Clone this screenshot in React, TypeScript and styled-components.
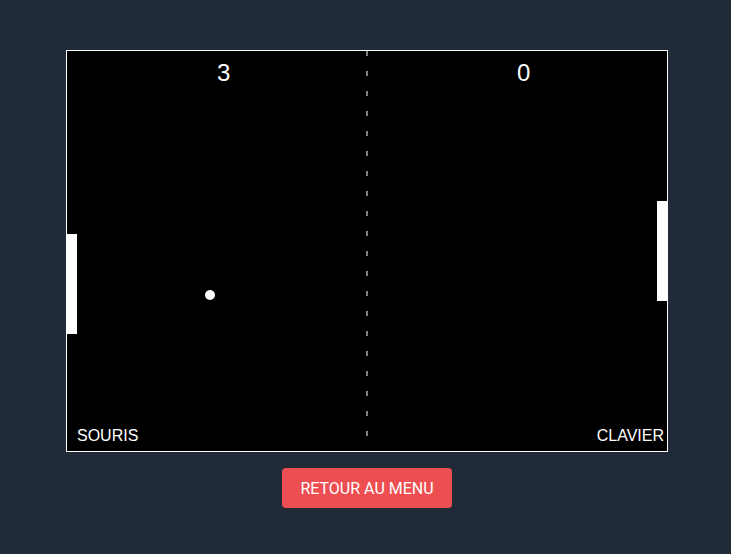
import React from 'react';
import styled, { createGlobalStyle } from 'styled-components';

const FIELD_W = 600;
const FIELD_H = 400;
const PADDLE_W = 10;
const PADDLE_H = 100;
const BALL_R = 5;

const GlobalStyle = createGlobalStyle`
    html, body {
        margin: 0;
        padding: 0;
        background: #212a37;
    }
    body {
        min-height: 100vh;
        font-family: Roboto, "Liberation Sans", sans-serif;
    }
`;

const Page = styled.div`
    display: flex;
    flex-direction: column;
    align-items: center;
    gap: 16px;
    padding: 50px 0 0 3px;
`;

const Field = styled.div`
    position: relative;
    width: ${FIELD_W}px;
    height: ${FIELD_H}px;
    background: #000;
    border: 1px solid #fff;
    overflow: hidden;
    font-family: "Liberation Sans", Arial, sans-serif;
    color: #fff;
`;

// scores on top, player names at the bottom
const Hud = styled.div`
    position: relative;
    height: 100%;
    display: flex;
    flex-direction: column;
    justify-content: space-between;
    box-sizing: border-box;
    padding: 10px 0 7px;
`;

const ScoreRow = styled.div`
    display: grid;
    grid-template-columns: 1fr 1fr;
`;

const Score = styled.div`
    padding-left: ${FIELD_W / 4}px;
    font-size: 24px;
    line-height: 24px;
`;

const NameRow = styled.div`
    display: flex;
    justify-content: space-between;
    padding: 0 3px 0 10px;
`;

const PlayerName = styled.div`
    font-size: 16px;
    line-height: 16px;
`;

const Net = styled.div`
    position: absolute;
    left: ${FIELD_W / 2 - 1}px;
    top: 0;
    width: 2px;
    height: 100%;
    background: repeating-linear-gradient(
        to bottom,
        #808080 0,
        #808080 5px,
        transparent 5px,
        transparent 20px
    );
`;

const Paddle = styled.div<{ $x: number; $y: number }>`
    position: absolute;
    left: ${(p) => p.$x}px;
    top: ${(p) => p.$y}px;
    width: ${PADDLE_W}px;
    height: ${PADDLE_H}px;
    background: #fff;
`;

const Ball = styled.div<{ $x: number; $y: number }>`
    position: absolute;
    left: ${(p) => p.$x - BALL_R}px;
    top: ${(p) => p.$y - BALL_R}px;
    width: ${BALL_R * 2}px;
    height: ${BALL_R * 2}px;
    border-radius: 50%;
    background: #fff;
`;

const MenuButton = styled.button`
    width: 170px;
    height: 40px;
    padding: 0 16px;
    border: none;
    border-radius: 4px;
    background: #ec4e51;
    color: #fff;
    font-family: Roboto, "Liberation Sans", sans-serif;
    font-size: 16px;
    cursor: pointer;
`;

const game = {
    scores: [3, 0],
    players: ['SOURIS', 'CLAVIER'],
    left: { x: 0, y: 183 },
    right: { x: FIELD_W - PADDLE_W, y: 150 },
    ball: { x: 143, y: 244 },
};

const App = () => {
    return (
        <>
            <GlobalStyle />
            <Page>
                <Field>
                    <Net />
                    <Paddle $x={game.left.x} $y={game.left.y} />
                    <Paddle $x={game.right.x} $y={game.right.y} />
                    <Ball $x={game.ball.x} $y={game.ball.y} />
                    <Hud>
                        <ScoreRow>
                            {game.scores.map((s, i) => (
                                <Score key={i}>{s}</Score>
                            ))}
                        </ScoreRow>
                        <NameRow>
                            {game.players.map((name) => (
                                <PlayerName key={name}>{name}</PlayerName>
                            ))}
                        </NameRow>
                    </Hud>
                </Field>
                <MenuButton>RETOUR AU MENU</MenuButton>
            </Page>
        </>
    );
};

export default App;
